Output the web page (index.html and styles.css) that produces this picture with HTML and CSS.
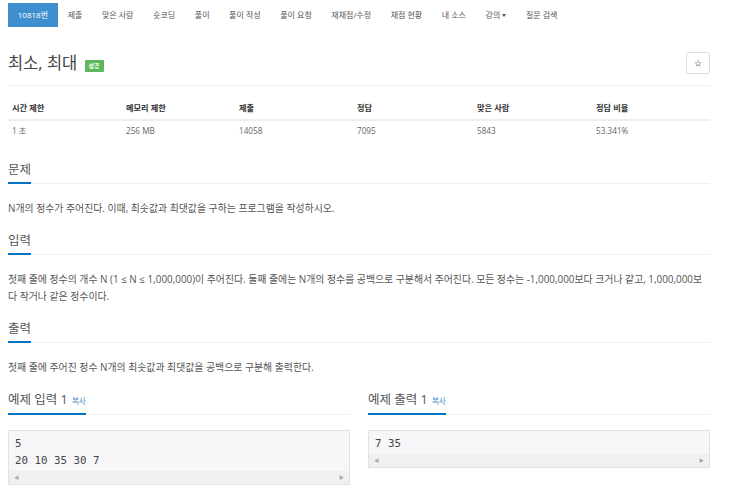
FILE: index.html
```html
<!DOCTYPE html>
<html lang="ko">
<head>
    <meta charset="UTF-8">
    <meta name="viewport" content="width=device-width, initial-scale=1.0">
    <title>최소, 최대</title>
    <link rel="stylesheet" href="styles.css">
</head>
<body>
    <div class="container">
        <ul class="problem-menu">
            <li class="active"><a href="#">10818번</a></li>
            <li><a href="#">제출</a></li>
            <li><a href="#">맞은 사람</a></li>
            <li><a href="#">숏코딩</a></li>
            <li><a href="#">풀이</a></li>
            <li><a href="#">풀이 작성</a></li>
            <li><a href="#">풀이 요청</a></li>
            <li><a href="#">재채점/수정</a></li>
            <li><a href="#">채점 현황</a></li>
            <li><a href="#">내 소스</a></li>
            <li><a href="#">강의<span class="caret"></span></a></li>
            <li><a href="#">질문 검색</a></li>
        </ul>

        <div class="page-header">
            <h1>최소, 최대 <span class="label-success">성공</span></h1>
            <button class="star-btn">☆</button>
        </div>

        <table class="problem-info">
            <colgroup>
                <col class="c1">
                <col class="c2">
                <col class="c3">
                <col class="c4">
                <col class="c5">
                <col class="c6">
            </colgroup>
            <thead>
                <tr>
                    <th>시간 제한</th>
                    <th>메모리 제한</th>
                    <th>제출</th>
                    <th>정답</th>
                    <th>맞은 사람</th>
                    <th>정답 비율</th>
                </tr>
            </thead>
            <tbody>
                <tr>
                    <td>1 초</td>
                    <td>256 MB</td>
                    <td>14058</td>
                    <td>7095</td>
                    <td>5843</td>
                    <td>53.341%</td>
                </tr>
            </tbody>
        </table>

        <section class="problem-section">
            <div class="headline"><h2>문제</h2></div>
            <p>N개의 정수가 주어진다. 이때, 최솟값과 최댓값을 구하는 프로그램을 작성하시오.</p>
        </section>

        <section class="problem-section">
            <div class="headline"><h2>입력</h2></div>
            <p>첫째 줄에 정수의 개수 N (1 ≤ N ≤ 1,000,000)이 주어진다. 둘째 줄에는 N개의 정수를 공백으로 구분해서 주어진다. 모든 정수는 -1,000,000보다 크거나 같고, 1,000,000보다 작거나 같은 정수이다.</p>
        </section>

        <section class="problem-section">
            <div class="headline"><h2>출력</h2></div>
            <p>첫째 줄에 주어진 정수 N개의 최솟값과 최댓값을 공백으로 구분해 출력한다.</p>
        </section>

        <div class="samples">
            <section class="sample">
                <div class="headline"><h2>예제 입력 1 <a class="copy" href="#">복사</a></h2></div>
                <div class="sample-box">
                    <pre>5
20 10 35 30 7</pre>
                    <div class="fake-scroll"><span>◀</span><span>▶</span></div>
                </div>
            </section>
            <section class="sample">
                <div class="headline"><h2>예제 출력 1 <a class="copy" href="#">복사</a></h2></div>
                <div class="sample-box">
                    <pre>7 35</pre>
                    <div class="fake-scroll"><span>◀</span><span>▶</span></div>
                </div>
            </section>
        </div>
    </div>
</body>
</html>
```

FILE: styles.css
```css
body {
    margin: 0;
    font-family: "Open Sans", "Noto Sans CJK KR", sans-serif;
    color: #555;
    background-color: #fff;
}
.container {
    width: 702px;
    padding: 0 8px;
}
a {
    text-decoration: none;
}

/* top tabs */
.problem-menu {
    display: flex;
    list-style: none;
    margin: 3px 0 0 0;
    padding: 0;
    height: 24px;
}
.problem-menu a {
    display: block;
    padding: 0 9.8px;
    line-height: 24px;
    font-size: 8px;
    color: #555;
}
.problem-menu .active a {
    background-color: #3f8ece;
    color: #fff;
}
.caret {
    display: inline-block;
    margin-left: 2px;
    vertical-align: middle;
    border-top: 3px solid #555;
    border-left: 2.5px solid transparent;
    border-right: 2.5px solid transparent;
}

/* title */
.page-header {
    display: flex;
    justify-content: space-between;
    align-items: center;
    margin-top: 25px;
    padding-bottom: 11px;
    border-bottom: 1px solid #eee;
}
.page-header h1 {
    margin: 0;
    font-size: 16.5px;
    line-height: 22px;
    font-weight: 400;
    color: #444;
}
.label-success {
    display: inline-block;
    margin-left: 3px;
    vertical-align: 1px;
    background-color: #5cb85c;
    color: #fff;
    font-size: 6px;
    font-weight: bold;
    line-height: 12px;
    padding: 0 4px;
    border-radius: 1px;
}
.star-btn {
    width: 24px;
    height: 22px;
    padding: 0;
    background: #fff;
    border: 1px solid #ddd;
    border-radius: 2px;
    font-size: 8px;
    color: #333;
}

/* info table */
.problem-info {
    width: 702px;
    border-collapse: collapse;
    margin-top: 11px;
    table-layout: fixed;
}
.problem-info .c1 { width: 114px; }
.problem-info .c2 { width: 113px; }
.problem-info .c3 { width: 118px; }
.problem-info .c4 { width: 120px; }
.problem-info .c5 { width: 119px; }
.problem-info .c6 { width: 118px; }
.problem-info th,
.problem-info td {
    text-align: left;
    font-size: 8.2px;
    line-height: 12px;
    padding: 5px 4px;
}
.problem-info th {
    color: #333;
    font-weight: bold;
    border-bottom: 2px solid #eee;
}
.problem-info td {
    padding-top: 4px;
    color: #666;
}

/* sections */
.headline {
    display: flex;
    border-bottom: 1px solid #eee;
}
.headline h2 {
    margin: 0 0 -1px 0;
    padding-bottom: 4px;
    font-size: 12.5px;
    line-height: 16px;
    font-weight: 400;
    color: #555;
    border-bottom: 2px solid #0076c0;
}
.problem-section {
    margin-top: 20px;
}
.problem-section + .problem-section {
    margin-top: 15px;
}
.problem-section p {
    margin: 16px 0 0 0;
    font-size: 9.9px;
    line-height: 17.5px;
}

/* samples */
.samples {
    display: grid;
    grid-template-columns: 1fr 1fr;
    gap: 18px;
    margin-top: 16px;
}
.copy {
    font-size: 7.5px;
    color: #428bca;
    margin-left: 1px;
}
.sample-box {
    margin-top: 15px;
    border: 1px solid #e1e1e8;
    background-color: #f7f7f9;
}
.sample-box pre {
    margin: 0;
    padding: 4px 6px 2px 6px;
    font-family: "DejaVu Sans Mono", monospace;
    font-size: 10.8px;
    line-height: 17px;
    color: #444;
}
.fake-scroll {
    display: flex;
    justify-content: space-between;
    height: 13px;
    line-height: 13px;
    padding: 0 5px;
    background-color: #f0f0f0;
    font-size: 5px;
    color: #a8a8a8;
}
```
